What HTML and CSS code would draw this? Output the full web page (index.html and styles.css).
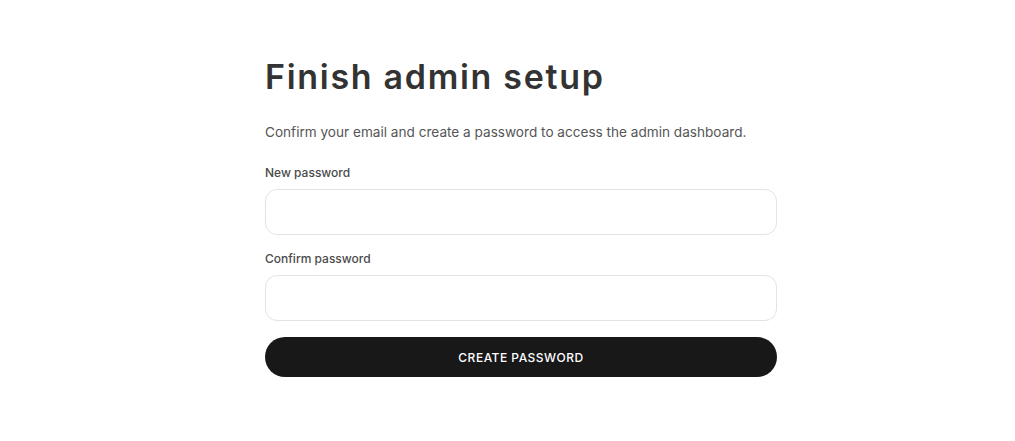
FILE: index.html
```html
<!DOCTYPE html>
<html lang="en">
<head>
<meta charset="utf-8">
<title>Finish admin setup</title>
<link rel="stylesheet" href="styles.css">
</head>
<body>
<main class="page">
  <form class="card">
    <h1 class="title">Finish admin setup</h1>
    <p class="subtitle">Confirm your email and create a password to access the admin dashboard.</p>
    <label class="field">
      <span class="label">New password</span>
      <input class="input" type="password">
    </label>
    <label class="field">
      <span class="label">Confirm password</span>
      <input class="input" type="password">
    </label>
    <button class="button" type="button">Create password</button>
  </form>
</main>
</body>
</html>
```

FILE: styles.css
```css
* { box-sizing: border-box; }
html, body { margin: 0; background: #fff; }
body {
  font-family: Inter, "Noto Sans", sans-serif;
  color: #333;
}
.page {
  padding: 53px 0 0 265px;
}
.card {
  width: 512px;
  display: flex;
  flex-direction: column;
}
.title {
  margin: 0;
  font-size: 34px;
  line-height: 48px;
  font-weight: 600;
  color: #333;
  letter-spacing: 1.7px;
}
.subtitle {
  margin: 21px 0 0;
  font-size: 13.6px;
  line-height: 20px;
  color: #555;
}
.field {
  display: flex;
  flex-direction: column;
  margin-top: 23px;
}
.field + .field { margin-top: 16px; }
.label {
  font-size: 12px;
  line-height: 16px;
  font-weight: 500;
  color: #4a4a4a;
  margin-bottom: 8px;
}
.input {
  height: 46px;
  border: 1px solid #e3e3e3;
  border-radius: 12px;
  background: #fff;
  font: inherit;
  padding: 0 14px;
  outline: none;
}
.button {
  margin-top: 16px;
  height: 40px;
  border: 0;
  border-radius: 20px;
  background: #181818;
  color: #fff;
  font-family: Inter, "Noto Sans", sans-serif;
  font-size: 12px;
  font-weight: 500;
  letter-spacing: 0.5px;
  text-transform: uppercase;
  cursor: pointer;
}
```
